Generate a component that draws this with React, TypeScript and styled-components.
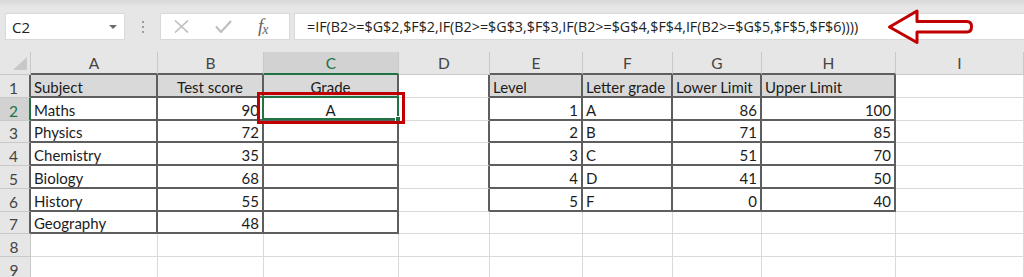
import React from "react";
import styled, { createGlobalStyle } from "styled-components";

const Global = createGlobalStyle`
  html, body { margin: 0; padding: 0; background: #fff; }
  * { box-sizing: border-box; }
`;

const Page = styled.div`
  width: 1024px;
  height: 277px;
  overflow: hidden;
  background: #fff;
  font-family: Lato, "Liberation Sans", sans-serif;
`;

/* ---------- formula toolbar ---------- */
const Toolbar = styled.div`
  height: 52px;
  display: flex;
  align-items: flex-start;
  padding: 13px 0 0 5px;
  background: linear-gradient(#d8d8d8 0px, #e6e6e6 7px, #e6e6e6 100%);
`;

const NameBox = styled.div`
  width: 120px;
  height: 27px;
  background: #fff;
  border: 1px solid #d9d9d9;
  display: flex;
  align-items: center;
  justify-content: space-between;
  padding: 0 7px 0 6px;
  font-family: "Open Sans", "Liberation Sans", sans-serif;
  font-size: 15px;
  color: #222;
`;

const Caret = styled.span`
  width: 0;
  height: 0;
  border-left: 4px solid transparent;
  border-right: 4px solid transparent;
  border-top: 4px solid #6b6b6b;
  margin-top: 1px;
`;

const Grip = styled.div`
  width: 35px;
  height: 27px;
  display: flex;
  flex-direction: column;
  align-items: center;
  justify-content: center;
  gap: 3px;
`;

const GripDot = styled.span`
  width: 2px;
  height: 2px;
  background: #9c9c9c;
`;

const FxBox = styled.div`
  width: 130px;
  height: 27px;
  background: #fff;
  border: 1px solid #d9d9d9;
  display: flex;
  align-items: center;
  padding-left: 13px;
  gap: 26px;
`;

const FxLabel = styled.span`
  font-family: "Liberation Serif", "DejaVu Serif", serif;
  font-style: italic;
  font-size: 19px;
  color: #666;
  letter-spacing: -1px;
  line-height: 1;
  margin-top: -2px;
`;

const FxSub = styled.span`
  font-size: 14px;
  position: relative;
  top: 2px;
`;

const FormulaField = styled.div`
  flex: 1;
  margin-left: 4px;
  height: 27px;
  background: #fff;
  border: 1px solid #d9d9d9;
  border-right: none;
  padding-left: 12px;
  font-family: "Open Sans", "Liberation Sans", sans-serif;
  font-size: 14.3px;
  line-height: 25px;
  color: #222;
  white-space: nowrap;
  position: relative;
`;

const ArrowSvg = styled.svg`
  position: absolute;
  left: 586px;
  top: -9px;
  width: 100px;
  height: 44px;
  overflow: visible;
`;

/* ---------- sheet grid ---------- */
const Sheet = styled.div`
  display: grid;
  grid-template-columns: 31px 127px 106px 135px 91px 93px 90px 89px 134px 1fr;
  grid-template-rows: 23px repeat(9, 22.75px);
`;

type Edge = "grid" | "dark" | "hdr" | "green";
const edge: Record<Edge, string> = {
  grid: "1px solid #dadada",
  hdr: "1px solid #c9c9c9",
  dark: "2px solid #5e5e5e",
  green: "2px solid #217346",
};

const Corner = styled.div`
  background: #e6e6e6;
  border-right: ${edge.hdr};
  border-bottom: ${edge.hdr};
  display: flex;
  align-items: flex-end;
  justify-content: flex-end;
  padding: 0 3px 4px 0;
`;

const ColHeader = styled.div<{ $active?: boolean; $bb: Edge }>`
  background: ${(p) => (p.$active ? "#d2d2d2" : "#e6e6e6")};
  color: ${(p) => (p.$active ? "#217346" : "#444")};
  border-right: ${edge.hdr};
  border-bottom: ${(p) => edge[p.$bb]};
  display: flex;
  align-items: center;
  justify-content: center;
  font-size: 15.5px;
  line-height: 18px;
`;

const RowHeader = styled.div<{ $active?: boolean; $rb: Edge }>`
  background: ${(p) => (p.$active ? "#d2d2d2" : "#e6e6e6")};
  color: ${(p) => (p.$active ? "#217346" : "#444")};
  border-right: ${(p) => edge[p.$rb]};
  border-bottom: ${edge.hdr};
  display: flex;
  align-items: flex-end;
  justify-content: center;
  font-size: 15.5px;
  line-height: 18px;
  padding-right: 2px;
`;

type Align = "l" | "r" | "c";
const justify: Record<Align, string> = { l: "flex-start", r: "flex-end", c: "center" };

const Cell = styled.div<{ $rb: Edge; $bb: Edge; $fill?: boolean; $align: Align }>`
  position: relative;
  background: ${(p) => (p.$fill ? "#d9d9d9" : "#fff")};
  border-right: ${(p) => edge[p.$rb]};
  border-bottom: ${(p) => edge[p.$bb]};
  display: flex;
  align-items: flex-end;
  justify-content: ${(p) => justify[p.$align]};
  padding: 0 3px 0 3px;
  font-size: 15px;
  line-height: 18px;
  color: #1c1c1c;
  white-space: nowrap;
`;

const Selection = styled.div`
  position: absolute;
  left: -2px;
  top: -2px;
  right: -2px;
  bottom: -1px;
  border: 2px solid #217346;
  z-index: 2;
`;

const FillHandle = styled.div`
  position: absolute;
  right: -4px;
  bottom: -4px;
  width: 6px;
  height: 6px;
  background: #217346;
  border: 1px solid #fff;
`;

const Callout = styled.div`
  position: absolute;
  left: -7px;
  top: -6px;
  right: -8px;
  bottom: -5px;
  border: 3px solid #c00000;
  z-index: 3;
`;

/* ---------- data ---------- */
const COLS = ["A", "B", "C", "D", "E", "F", "G", "H", "I"];

type V = [string, Align];
const e: V = ["", "l"];
const DATA: V[][] = [
  [["Subject", "l"], ["Test score", "c"], ["Grade", "c"], e, ["Level", "l"], ["Letter grade", "l"], ["Lower Limit", "l"], ["Upper Limit", "l"], e],
  [["Maths", "l"], ["90", "r"], ["A", "c"], e, ["1", "r"], ["A", "l"], ["86", "r"], ["100", "r"], e],
  [["Physics", "l"], ["72", "r"], e, e, ["2", "r"], ["B", "l"], ["71", "r"], ["85", "r"], e],
  [["Chemistry", "l"], ["35", "r"], e, e, ["3", "r"], ["C", "l"], ["51", "r"], ["70", "r"], e],
  [["Biology", "l"], ["68", "r"], e, e, ["4", "r"], ["D", "l"], ["41", "r"], ["50", "r"], e],
  [["History", "l"], ["55", "r"], e, e, ["5", "r"], ["F", "l"], ["0", "r"], ["40", "r"], e],
  [["Geography", "l"], ["48", "r"], e, e, e, e, e, e, e],
  [e, e, e, e, e, e, e, e, e],
  [e, e, e, e, e, e, e, e, e],
];

const boxed = (r: number, c: number) =>
  (c >= 0 && c <= 2 && r >= 1 && r <= 7) || (c >= 4 && c <= 7 && r >= 1 && r <= 6);

const FORMULA = "=IF(B2>=$G$2,$F$2,IF(B2>=$G$3,$F$3,IF(B2>=$G$4,$F$4,IF(B2>=$G$5,$F$5,$F$6))))";

export default function App() {
  return (
    <Page>
      <Global />
      <Toolbar>
        <NameBox>
          <span>C2</span>
          <Caret />
        </NameBox>
        <Grip>
          <GripDot />
          <GripDot />
          <GripDot />
        </Grip>
        <FxBox>
          <svg width="15" height="13" viewBox="0 0 15 13">
            <path d="M1 0.5 L14 12.5 M14 0.5 L1 12.5" stroke="#bdbdbd" strokeWidth="1.6" fill="none" />
          </svg>
          <svg width="17" height="13" viewBox="0 0 17 13">
            <path d="M1 6.5 L6 12 L16 1" stroke="#bdbdbd" strokeWidth="2" fill="none" />
          </svg>
          <FxLabel>
            f<FxSub>x</FxSub>
          </FxLabel>
        </FxBox>
        <FormulaField>
          {FORMULA}
          <ArrowSvg viewBox="880 4 100 44">
            <path
              d="M888.5 26 L916 10 L916 20.5 L966 20.5 Q970.5 20.5 970.5 25.75 Q970.5 31 966 31 L916 31 L916 41.5 Z"
              fill="#fff"
              stroke="#c00000"
              strokeWidth="3"
              strokeLinejoin="round"
            />
          </ArrowSvg>
        </FormulaField>
      </Toolbar>

      <Sheet>
        <Corner>
          <svg width="14" height="13" viewBox="0 0 14 13">
            <path d="M0 13 L14 0 L14 13 Z" fill="#c8c8c8" />
          </svg>
        </Corner>
        {COLS.map((c, i) => (
          <ColHeader
            key={c}
            $active={i === 2}
            $bb={i === 2 ? "green" : boxed(1, i) ? "dark" : "hdr"}
          >
            {c}
          </ColHeader>
        ))}
        {DATA.map((row, ri) => {
          const r = ri + 1;
          return (
            <React.Fragment key={r}>
              <RowHeader $active={r === 2} $rb={r === 2 ? "green" : boxed(r, 0) ? "dark" : "hdr"}>
                {r}
              </RowHeader>
              {row.map(([t, a], c) => {
                const isSel = r === 2 && c === 2;
                return (
                  <Cell
                    key={c}
                    $rb={boxed(r, c) || boxed(r, c + 1) ? "dark" : "grid"}
                    $bb={boxed(r, c) || boxed(r + 1, c) ? "dark" : "grid"}
                    $fill={r === 1 && boxed(r, c)}
                    $align={a}
                  >
                    {t}
                    {isSel && (
                      <>
                        <Selection>
                          <FillHandle />
                        </Selection>
                        <Callout />
                      </>
                    )}
                  </Cell>
                );
              })}
            </React.Fragment>
          );
        })}
      </Sheet>
    </Page>
  );
}
